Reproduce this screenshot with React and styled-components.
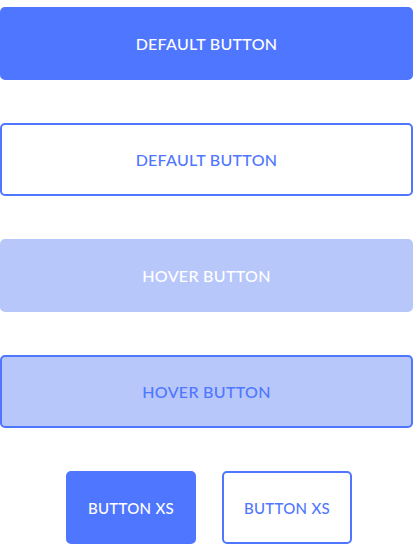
import React from "react";
import styled, { createGlobalStyle, css } from "styled-components";

const Global = createGlobalStyle`
	body {
		margin: 0;
		background: #ffffff;
		font-family: Lato, "Noto Sans", sans-serif;
	}
`;

const Page = styled.div`
	display: flex;
	flex-direction: column;
	gap: 43px;
	padding: 7px 1px 0 0;
`;

const Button = styled.button`
	box-sizing: border-box;
	display: flex;
	align-items: center;
	justify-content: center;
	height: 73px;
	width: 100%;
	border-radius: 5px;
	border: 2px solid transparent;
	font-family: Lato, "Noto Sans", sans-serif;
	font-size: 16px;
	font-weight: 500;
	text-transform: uppercase;
	letter-spacing: 0.3px;
	cursor: pointer;

	${({ variant }) =>
		variant === "filled" &&
		css`
			background: #4f76ff;
			border-color: #4f76ff;
			color: #ffffff;
		`}
	${({ variant }) =>
		variant === "outline" &&
		css`
			background: #ffffff;
			border-color: #4f76ff;
			color: #4f76ff;
		`}
	${({ variant }) =>
		variant === "hover" &&
		css`
			background: #b7c7fa;
			border-color: #b7c7fa;
			color: #ffffff;
		`}
	${({ variant }) =>
		variant === "hoverOutline" &&
		css`
			background: #b7c7fa;
			border-color: #4f76ff;
			color: #4f76ff;
		`}
	${({ $xs }) =>
		$xs &&
		css`
			width: 130px;
			font-size: 15px;
		`}
`;

const Row = styled.div`
	display: flex;
	justify-content: center;
	gap: 26px;
	padding-left: 5px;
`;

const App = () => {
	return (
		<>
			<Global />
			<Page>
				<Button variant="filled">Default button</Button>
				<Button variant="outline">Default button</Button>
				<Button variant="hover">Hover button</Button>
				<Button variant="hoverOutline">Hover button</Button>
				<Row>
					<Button variant="filled" $xs>
						Button XS
					</Button>
					<Button variant="outline" $xs>
						Button XS
					</Button>
				</Row>
			</Page>
		</>
	);
};

export default App;
